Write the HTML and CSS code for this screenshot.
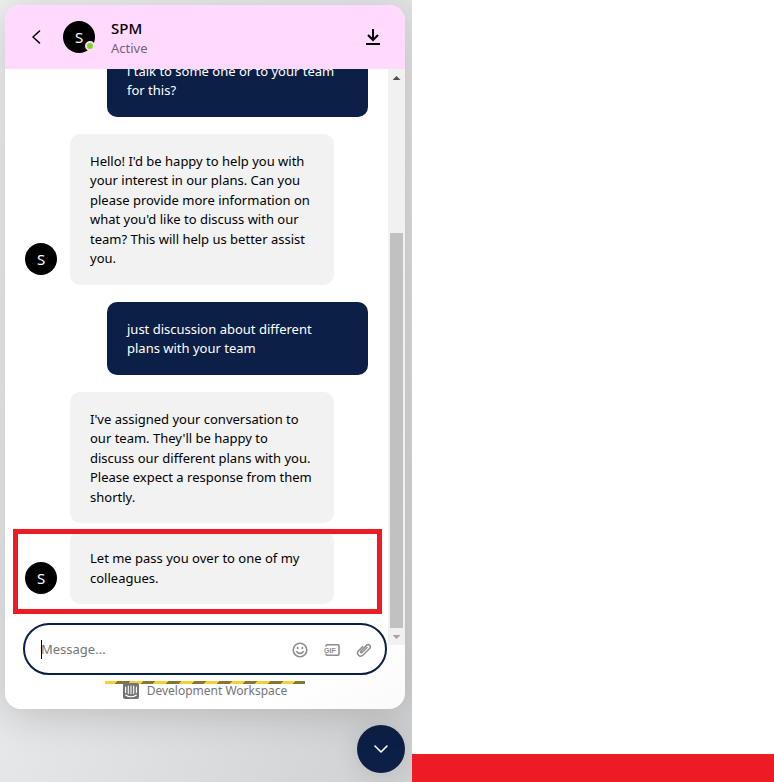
FILE: index.html
```html
<!DOCTYPE html>
<html lang="en">
<head>
<meta charset="utf-8">
<title>SPM Messenger</title>
<link rel="stylesheet" href="styles.css">
</head>
<body>
<div class="page">
  <main class="stage">
    <section class="messenger">
      <header class="header">
        <button class="icon-button" type="button" aria-label="Back">
          <svg width="16" height="16" viewBox="0 0 16 16" fill="none" stroke="#000" stroke-width="1.6" stroke-linecap="round" stroke-linejoin="round"><path d="M10.500 2 4 8l6.500 6"/></svg>
        </button>
        <div class="avatar">S<span class="status"></span></div>
        <div class="identity">
          <h1 class="name">SPM</h1>
          <p class="presence">Active</p>
        </div>
        <button class="icon-button" type="button" aria-label="Minimize">
          <svg width="16" height="18" viewBox="0 0 16 18" fill="none" stroke="#000" stroke-width="2"><path d="M8 1v11M3 7l5 5 5-5M1 16h14"/></svg>
        </button>
      </header>

      <div class="conversation">
        <div class="row row-user"><p class="bubble bubble-user">i talk to some one or to your team<br>for this?</p></div>
        <div class="row">
          <div class="avatar">S</div>
          <p class="bubble">Hello! I'd be happy to help you with your interest in our plans. Can you please provide more information on what you'd like to discuss with our team? This will help us better assist you.</p>
        </div>
        <div class="row row-user"><p class="bubble bubble-user">just discussion about different<br>plans with your team</p></div>
        <div class="row row-grouped">
          <p class="bubble">I've assigned your conversation to our team. They'll be happy to discuss our different plans with you. Please expect a response from them shortly.</p>
        </div>
        <div class="row row-marked">
          <div class="avatar">S</div>
          <p class="bubble">Let me pass you over to one of my colleagues.</p>
        </div>
      </div>

      <form class="composer">
        <input class="field" type="text" placeholder="Message..." aria-label="Message">
        <span class="caret"></span>
        <button class="tool" type="button" aria-label="Emoji">
          <svg width="16" height="16" viewBox="0 0 16 16" fill="none" stroke="#8d8d8d" stroke-width="1.6" stroke-linecap="round"><circle cx="8" cy="8" r="6.8"/><path d="M4.8 9.6c1.300 2.400 5.100 2.400 6.400 0"/><path d="M5.700 5.800v.4M10.300 5.800v.4" stroke-width="1.900"/></svg>
        </button>
        <button class="tool" type="button" aria-label="GIF">
          <svg width="16" height="16" viewBox="0 0 16 16" fill="none" stroke="#8d8d8d" stroke-width="1.600"><path d="M2 4.500V4q0-1.200 1.200-1.200h10.600Q15 2.800 15 4v8q0 1.200-1.200 1.200H3.200Q2 13.200 2 12v-.5"/><text class="gif" x="0" y="10.500">GIF</text></svg>
        </button>
        <button class="tool" type="button" aria-label="Attach file">
          <svg width="16" height="16" viewBox="0 0 16 16" fill="none" stroke="#8d8d8d" stroke-width="1.500" stroke-linecap="round" stroke-linejoin="round"><path d="M11 5.500 6.200 10.300c-1 .9-2.200-.3-1.300-1.300l5.600-5.600c2.300-2.200 5.300.8 3.100 3.100l-6.500 6.500c-3.300 3.100-7.500-1.100-4.500-4.300l3.900-3.900"/></svg>
        </button>
      </form>

      <footer class="footer">
        <svg width="16" height="16" viewBox="0 0 16 16"><rect width="16" height="16" rx="2" fill="#737373"/><path d="M2.600 4v5.500M5.300 3v7.500M8 2.700v8M10.700 3v7.500M13.400 4v5.500M2.600 12c3 2.400 7.800 2.400 10.800 0" fill="none" stroke="#fff" stroke-width="1.100" stroke-linecap="round"/></svg>
        <a class="workspace" href="#">Development Workspace</a>
      </footer>

      <div class="scrollbar"><span class="arrow arrow-up"></span><span class="thumb"></span><span class="arrow arrow-down"></span></div>
    </section>

    <button class="launcher" type="button" aria-label="Close messenger">
      <svg width="16" height="16" viewBox="0 0 16 16" fill="none" stroke="#fff" stroke-width="1.600" stroke-linecap="round" stroke-linejoin="round"><path d="m2 5 6 6 6-6"/></svg>
    </button>
  </main>
  <aside class="side"><div class="side-bar"></div></aside>
</div>
</body>
</html>
```
FILE: styles.css
```css
* { box-sizing: border-box; }
body {
  margin: 0;
  font: 13px/1.5 "Noto Sans", sans-serif;
  color: #000;
  background: #fff;
}
h1, p { margin: 0; }
button { padding: 0; border: 0; background: none; cursor: pointer; }
svg { display: block; }

.page {
  display: grid;
  grid-template-columns: 412fr 362fr;
  height: 100vh;
}
.stage {
  display: flex;
  flex-direction: column;
  gap: 16px;
  min-height: 0;
  padding: 5px 7px 9px 5px;
  overflow: hidden;
  background: linear-gradient(115deg, #f0f0f0 0%, #e6e7e8 45%, #cfd0d2 100%);
}
.messenger {
  position: relative;
  flex: 1;
  display: flex;
  flex-direction: column;
  min-height: 0;
  border-radius: 16px;
  overflow: hidden;
  background: linear-gradient(150deg, #fff 90%, #fafafa);
  box-shadow: 0 5px 40px rgba(0, 0, 0, 0.18);
}

.header {
  display: flex;
  align-items: center;
  flex: none;
  height: 64px;
  padding: 0 16px;
  background: #ffdafe;
}
.icon-button {
  display: grid;
  place-items: center;
  width: 32px;
  height: 32px;
}
.avatar {
  position: relative;
  flex: none;
  width: 32px;
  height: 32px;
  border-radius: 50%;
  background: #000;
  color: #fff;
  font-size: 15px;
  line-height: 32px;
  text-align: center;
}
.header .avatar { margin: 0 16px 0 10px; }
.status {
  position: absolute;
  right: 0;
  bottom: 2px;
  width: 10px;
  height: 10px;
  border: 2px solid #ffdafe;
  border-radius: 50%;
  background: #7fd321;
}
.identity { flex: 1; padding-top: 2px; }
.name { font-size: 15px; font-weight: 500; line-height: 20px; }
.presence { line-height: 20px; color: #73627a; }

.conversation {
  flex: 1;
  display: flex;
  flex-direction: column;
  justify-content: flex-end;
  gap: 17px;
  min-height: 0;
  padding: 0 37px 19px 20px;
  overflow: hidden;
}
.row {
  position: relative;
  display: flex;
  flex: none;
  align-items: flex-end;
  gap: 13px;
}
.row .avatar { margin-bottom: 10px; }
.row-user { justify-content: flex-end; }
.row-grouped { padding-left: 45px; margin-bottom: -9px; }
.bubble {
  width: 264px;
  padding: 18px 20px 16px;
  border-radius: 10px;
  background: #f2f2f2;
}
.bubble-user {
  width: 261px;
  background: #0c1f46;
  color: #fff;
}
.row-marked::after {
  content: "";
  position: absolute;
  inset: -2px -14px -10px -12px;
  border: 5px solid #ed1c24;
}

.composer {
  position: relative;
  display: flex;
  flex: none;
  align-items: center;
  gap: 16px;
  height: 52px;
  margin: 0 18px;
  padding: 1px 13px 0 16px;
  border: 2px solid #0c1f46;
  border-radius: 26px;
  background: #fff;
}
.field {
  flex: 1;
  min-width: 0;
  padding: 0;
  border: 0;
  outline: 0;
  background: none;
  font: inherit;
}
.field::placeholder { color: #757575; }
.caret {
  position: absolute;
  left: 16px;
  width: 1px;
  height: 19px;
  background: #000;
}
.gif { font: 700 7px "Liberation Sans", sans-serif; fill: #8d8d8d; stroke: none; }

.footer {
  display: flex;
  align-items: flex-start;
  justify-content: center;
  gap: 8px;
  flex: none;
  height: 28px;
  margin-top: 6px;
  padding-top: 2px;
}
.footer::before {
  content: "";
  position: absolute;
  left: 25%;
  width: 50%;
  height: 3px;
  margin-top: -2px;
  background: repeating-linear-gradient(135deg, #f5cf33 0 9px, #877535 9px 18px);
}
.workspace {
  font-size: 12px;
  line-height: 16px;
  color: #757575;
  text-decoration: none;
}
.footer svg { position: relative; }

.scrollbar {
  position: absolute;
  top: 64px;
  right: 0;
  bottom: 64px;
  display: flex;
  flex-direction: column;
  align-items: center;
  width: 17px;
  background: #f1f1f1;
}
.arrow {
  flex: none;
  width: 8px;
  height: 4px;
  margin: 7px 0 6px;
}
.arrow-up { background: #505050; clip-path: polygon(50% 0, 100% 100%, 0 100%); }
.arrow-down { background: #a3a3a3; clip-path: polygon(0 0, 100% 0, 50% 100%); }
.thumb {
  width: 13px;
  height: 395px;
  margin-top: auto;
  background: #c1c1c1;
}

.launcher {
  display: grid;
  place-items: center;
  flex: none;
  align-self: flex-end;
  width: 48px;
  height: 48px;
  border-radius: 50%;
  background: #0c1f46;
  box-shadow: 0 2px 24px rgba(0, 0, 0, 0.12);
}

.side { display: flex; align-items: flex-end; }
.side-bar { flex: 1; height: 28px; background: #ed1c24; }
```
